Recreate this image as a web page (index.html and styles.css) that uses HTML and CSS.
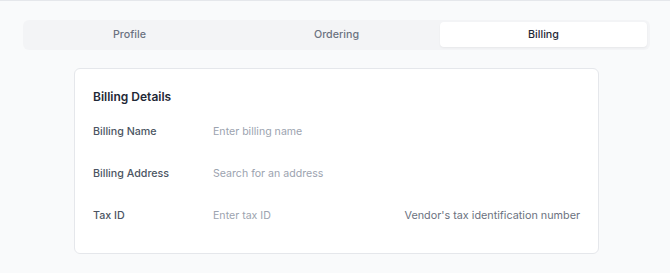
FILE: index.html
```html
<!DOCTYPE html>
<html lang="en">
  <head>
    <meta charset="UTF-8" />
    <meta name="viewport" content="width=device-width, initial-scale=1.0" />
    <title>Vendor settings</title>
    <link rel="stylesheet" href="styles.css">
  </head>
  <body>
    <main class="page">
      <nav class="tabs">
        <button type="button" class="tab">Profile</button>
        <button type="button" class="tab">Ordering</button>
        <button type="button" class="tab active">Billing</button>
      </nav>
      <section class="card">
        <h2>Billing Details</h2>
        <div class="row">
          <label for="billingName">Billing Name</label>
          <input type="text" id="billingName" placeholder="Enter billing name" />
        </div>
        <div class="row">
          <label for="billingAddress">Billing Address</label>
          <input type="text" id="billingAddress" placeholder="Search for an address" />
        </div>
        <div class="row">
          <label for="taxId">Tax ID</label>
          <input type="text" id="taxId" placeholder="Enter tax ID" />
          <small class="hint">Vendor's tax identification number</small>
        </div>
      </section>
    </main>
  </body>
</html>
```

FILE: styles.css
```css
* {
  margin: 0;
  padding: 0;
  box-sizing: border-box;
  font-family: "Inter", "Liberation Sans", sans-serif;
}

body {
  background-color: #f9fafb;
  border-top: 1px solid #e5e7eb;
  color: #374151;
}

.page {
  padding: 19px 20px 0 23px;
}

.tabs {
  display: grid;
  grid-template-columns: repeat(3, 1fr);
  background: #f3f4f6;
  border-radius: 6px;
  padding: 2px 3px 3px;
  height: 30px;
}

.tab {
  font-size: 10.7px;
  font-weight: 500;
  color: #6b7280;
  background: none;
  border: none;
  border-radius: 4px;
  cursor: pointer;
}

.tab.active {
  background: #fff;
  color: #1f2937;
  box-shadow: 0 1px 2px rgba(0, 0, 0, 0.05);
}

.card {
  width: 525px;
  margin: 18px auto 0;
  background: #fff;
  border: 1px solid #e5e7eb;
  border-radius: 6px;
  padding: 18px 18px 17px;
}

h2 {
  font-size: 12px;
  font-weight: 600;
  color: #1f2937;
  line-height: 20px;
  margin-bottom: 3px;
}

.row {
  display: flex;
  align-items: center;
  height: 42px;
}

label {
  width: 120px;
  flex-shrink: 0;
  font-size: 10.7px;
  font-weight: 500;
  color: #4b5563;
}

input {
  flex: 1;
  font-size: 10.6px;
  border: none;
  outline: none;
  background: none;
  color: #111827;
  padding: 6px 0;
}

input::placeholder {
  color: #9ca3af;
}

.hint {
  font-size: 10.8px;
  color: #6b7280;
  white-space: nowrap;
}
```
